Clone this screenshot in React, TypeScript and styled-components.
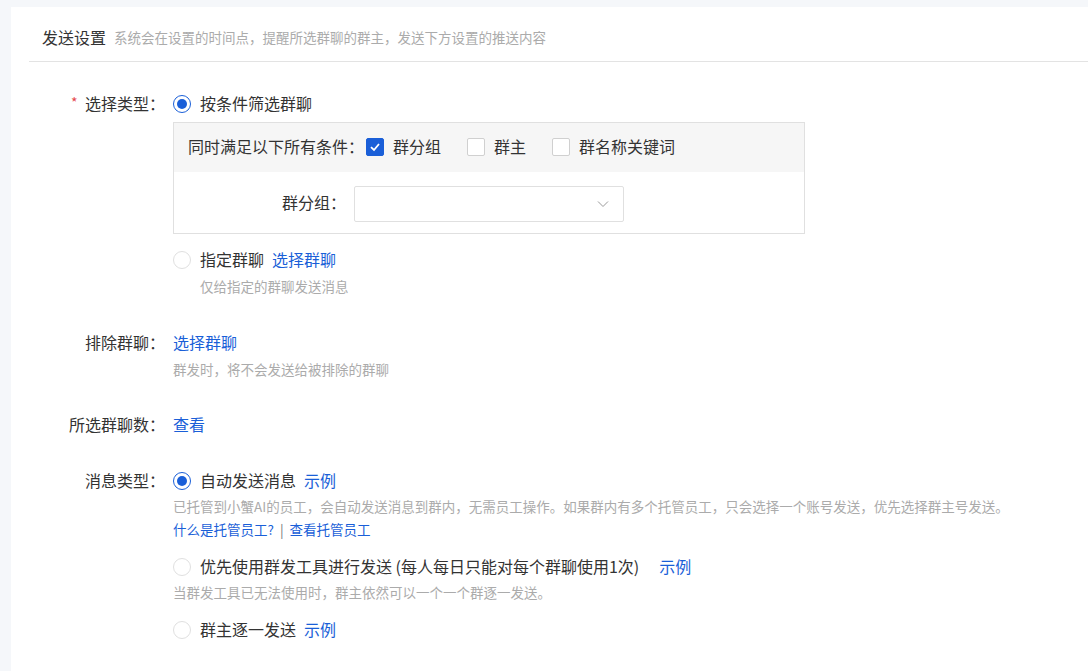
import React from 'react';
import styled, { createGlobalStyle } from 'styled-components';

const GlobalStyle = createGlobalStyle`
  html, body {
    margin: 0;
    height: 100%;
    overflow: hidden;
    background: #f5f7fa;
  }
  body {
    font-family: "Noto Sans CJK SC", "Liberation Sans", sans-serif;
    color: #333;
  }
  * { box-sizing: border-box; }
`;

const Page = styled.div`
  padding: 7px 0 0 11px;
  height: 671px;
`;

const Panel = styled.div`
  background: #fff;
  height: 664px;
  padding-left: 18px;
`;

const Header = styled.div`
  display: flex;
  align-items: center;
  gap: 8px;
  height: 55px;
  padding: 6px 0 0 13px;
  border-bottom: 1px solid #e3e3e3;
`;

const Title = styled.span`
  font-size: 16px;
  color: #333;
`;

const Hint = styled.div<{ $top?: number }>`
  font-size: 13.5px;
  line-height: 20px;
  margin-top: ${p => p.$top ?? 0}px;
  color: #ababab;
  white-space: nowrap;
`;

const Indented = styled(Hint)`
  margin-left: 27px;
`;

const Form = styled.div`
  padding-top: 30px;
`;

const Row = styled.div<{ $gap?: number }>`
  display: flex;
  margin-bottom: ${p => p.$gap ?? 0}px;
`;

const Label = styled.div<{ $required?: boolean }>`
  position: relative;
  flex: none;
  width: 136px;
  margin-right: 8px;
  font-size: 16px;
  line-height: 22px;
  text-align: right;
  white-space: nowrap;
  ${p => p.$required && `
    &::before {
      content: '*';
      position: absolute;
      left: 42px;
      top: -1px;
      font-size: 14px;
      color: #e5484d;
    }
  `}
`;

const Content = styled.div`
  flex: 1;
  min-width: 0;
`;

const Option = styled.div<{ $top?: number }>`
  display: flex;
  align-items: center;
  height: 24px;
  margin-top: ${p => p.$top ?? 0}px;
  padding-bottom: 2px;
  font-size: 16px;
  white-space: nowrap;
`;

const RadioMark = styled.span<{ $checked?: boolean }>`
  flex: none;
  width: 18px;
  height: 18px;
  margin: 2px 9px 0 0;
  border-radius: 50%;
  border: 1px solid ${p => (p.$checked ? '#1a5fd8' : '#e0e0e0')};
  display: flex;
  align-items: center;
  justify-content: center;
  &::after {
    content: '';
    display: ${p => (p.$checked ? 'block' : 'none')};
    width: 10px;
    height: 10px;
    border-radius: 50%;
    background: #1a5fd8;
  }
`;

const TextLink = styled.a<{ $gap?: number }>`
  color: #1a5fd8;
  margin-left: ${p => p.$gap ?? 0}px;
  cursor: pointer;
`;

const SmallLinks = styled.div`
  font-size: 13.5px;
  line-height: 20px;
  color: #1a5fd8;
  margin-top: 3px;
  white-space: nowrap;
`;

const Divider = styled.span`
  color: #777;
  margin: 0 6px;
`;

const ConditionBox = styled.div`
  width: 632px;
  height: 112px;
  margin-top: 6px;
  border: 1px solid #e0e0e0;
`;

const ConditionHead = styled.div`
  display: flex;
  align-items: center;
  height: 49px;
  padding: 0 0 3px 14px;
  background: #f6f6f6;
  font-size: 16px;
  white-space: nowrap;
`;

const ConditionBody = styled.div`
  display: flex;
  align-items: center;
  height: 61px;
  padding: 0 0 2px 108px;
  font-size: 16px;
`;

const CheckItem = styled.label<{ $first?: boolean }>`
  display: flex;
  align-items: center;
  margin-left: ${p => (p.$first ? 2 : 14)}px;
  margin-right: 12px;
`;

const CheckMark = styled.span<{ $checked?: boolean }>`
  flex: none;
  width: 18px;
  height: 18px;
  margin: 2px 9px 0 0;
  border-radius: 2px;
  border: 1px solid ${p => (p.$checked ? '#1a5fd8' : '#d0d0d0')};
  background: ${p => (p.$checked ? '#1a5fd8' : '#fff')};
  display: flex;
  align-items: center;
  justify-content: center;
`;

const Select = styled.div`
  display: flex;
  align-items: center;
  justify-content: flex-end;
  width: 270px;
  height: 36px;
  margin: 5px 0 0 8px;
  padding-right: 14px;
  border: 1px solid #e0e0e0;
  border-radius: 2px;
`;

const Check = () => (
  <svg width="12" height="12" viewBox="0 0 12 12" fill="none">
    <path d="M2 6.2 L5 9 L10 3" stroke="#fff" strokeWidth="1.8" />
  </svg>
);

const Chevron = () => (
  <svg width="12" height="8" viewBox="0 0 12 8" fill="none">
    <path d="M1 1.5 L6 6.5 L11 1.5" stroke="#9a9a9a" strokeWidth="1" />
  </svg>
);

export default function App() {
  return (
    <Page>
      <GlobalStyle />
      <Panel>
        <Header>
          <Title>发送设置</Title>
          <Hint>系统会在设置的时间点，提醒所选群聊的群主，发送下方设置的推送内容</Hint>
        </Header>
        <Form>
          <Row $gap={35}>
            <Label $required>选择类型：</Label>
            <Content>
              <Option><RadioMark $checked />按条件筛选群聊</Option>
              <ConditionBox>
                <ConditionHead>
                  同时满足以下所有条件：
                  <CheckItem $first><CheckMark $checked><Check /></CheckMark>群分组</CheckItem>
                  <CheckItem><CheckMark />群主</CheckItem>
                  <CheckItem><CheckMark />群名称关键词</CheckItem>
                </ConditionHead>
                <ConditionBody>
                  群分组：
                  <Select><Chevron /></Select>
                </ConditionBody>
              </ConditionBox>
              <Option $top={14}><RadioMark />指定群聊<TextLink $gap={8}>选择群聊</TextLink></Option>
              <Indented $top={4}>仅给指定的群聊发送消息</Indented>
            </Content>
          </Row>
          <Row $gap={34}>
            <Label>排除群聊：</Label>
            <Content>
              <Option><TextLink>选择群聊</TextLink></Option>
              <Hint $top={4}>群发时，将不会发送给被排除的群聊</Hint>
            </Content>
          </Row>
          <Row $gap={32}>
            <Label>所选群聊数：</Label>
            <Content>
              <Option><TextLink>查看</TextLink></Option>
            </Content>
          </Row>
          <Row>
            <Label>消息类型：</Label>
            <Content>
              <Option><RadioMark $checked />自动发送消息<TextLink $gap={8}>示例</TextLink></Option>
              <Hint $top={3}>已托管到小蟹AI的员工，会自动发送消息到群内，无需员工操作。如果群内有多个托管员工，只会选择一个账号发送，优先选择群主号发送。</Hint>
              <SmallLinks>什么是托管员工?<Divider>|</Divider>查看托管员工</SmallLinks>
              <Option $top={16}><RadioMark />优先使用群发工具进行发送 (每人每日只能对每个群聊使用1次)<TextLink $gap={20}>示例</TextLink></Option>
              <Hint $top={3}>当群发工具已无法使用时，群主依然可以一个一个群逐一发送。</Hint>
              <Option $top={16}><RadioMark />群主逐一发送<TextLink $gap={8}>示例</TextLink></Option>
            </Content>
          </Row>
        </Form>
      </Panel>
    </Page>
  );
}
